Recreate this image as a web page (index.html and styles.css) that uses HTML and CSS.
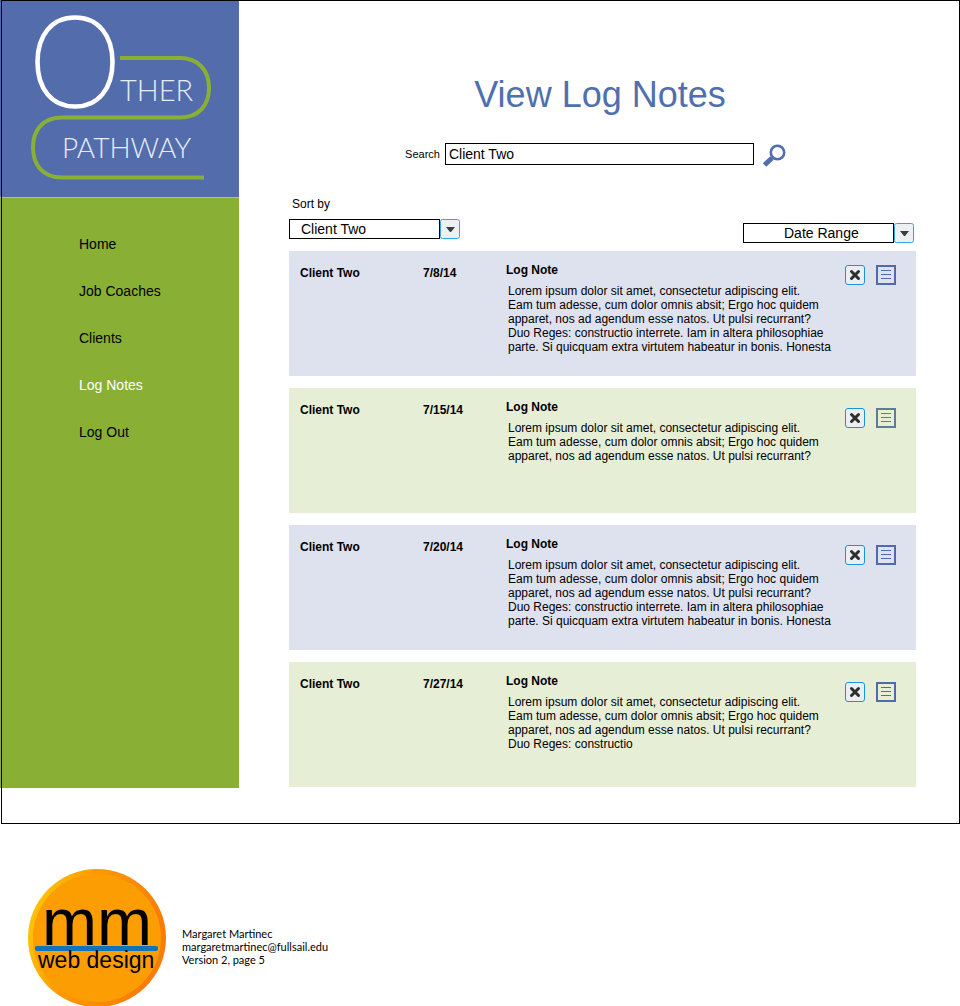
FILE: index.html
```html
<!DOCTYPE html>
<html lang="en">
<head>
<meta charset="utf-8">
<title>Other Pathway – View Log Notes</title>
<link rel="stylesheet" href="styles.css">
</head>
<body>
<svg class="sprite" aria-hidden="true">
  <symbol id="arrow" viewBox="0 0 20 20">
    <rect x="0.5" y="0.5" width="19" height="19" rx="2" fill="#edf0f3" stroke="#35a5e8"/>
    <path d="M6 8h9l-4 5h-1z" fill="#3c3c3c"/>
  </symbol>
  <symbol id="cross" viewBox="0 0 20 20">
    <rect x="0.5" y="0.5" width="19" height="19" rx="2.500" fill="#eceff2" stroke="#1794dd"/>
    <path d="M6.500 6.500l7 7M13.500 6.500l-7 7" stroke="#2e2e2e" stroke-width="3" stroke-linecap="round"/>
  </symbol>
  <symbol id="note" viewBox="0 0 20 20">
    <rect x="1" y="1" width="18" height="18" fill="none" stroke="currentColor" stroke-width="2"/>
    <path d="M5 5.500h10M5 9.500h10M5 13.500h10" stroke="currentColor"/>
  </symbol>
</svg>

<div class="frame">
  <aside class="sidebar">
    <a class="brand" href="#" aria-label="Other Pathway">
      <svg class="brand-logo" viewBox="0 0 239 197" width="239" height="197">
        <path d="M120 58H180C198 58 209 70 209 88S198 117.500 180 117.500H62C43 117.500 33 130 33 147.500S43 177.500 62 177.500H204" fill="none" stroke="#8aaf35" stroke-width="4"/>
        <path d="M75 17.500C98 17.500 112.500 35 112.500 62S98 106.500 75 106.500S37.500 89 37.500 62S52 17.500 75 17.500Z" fill="none" stroke="#fff" stroke-width="4.600"/>
        <text class="logo-text logo-text-top" x="120" y="101">THER</text>
        <text class="logo-text logo-text-bottom" x="62" y="158">PATHWAY</text>
      </svg>
    </a>
    <nav class="menu">
      <a href="#">Home</a>
      <a href="#">Job Coaches</a>
      <a href="#">Clients</a>
      <a class="current" href="#" aria-current="page">Log Notes</a>
      <a href="#">Log Out</a>
    </nav>
  </aside>

  <main class="content">
    <h1>View Log Notes</h1>
    <form class="search">
      <label for="q">Search</label>
      <input id="q" type="text" value="Client Two">
      <button type="button" aria-label="Search">
        <svg viewBox="0 0 24 24" width="24" height="24">
          <circle cx="15.500" cy="9.500" r="6.700" fill="none" stroke="#4f6fb0" stroke-width="2.600"/>
          <path d="M10 15l-7.500 7" stroke="#4f6fb0" stroke-width="5"/>
        </svg>
      </button>
    </form>

    <div class="filters">
      <div class="sort">
        <label for="sort">Sort by</label>
        <span class="picker">
          <select id="sort"><option>Client Two</option></select>
          <svg width="20" height="20" aria-hidden="true"><use href="#arrow"/></svg>
        </span>
      </div>
      <span class="picker picker-date">
        <select aria-label="Date range"><option>Date Range</option></select>
        <svg width="20" height="20" aria-hidden="true"><use href="#arrow"/></svg>
      </span>
    </div>

    <section class="entries">
      <article class="entry">
        <h2>Client Two</h2>
        <time datetime="2014-07-08">7/8/14</time>
        <div class="note">
          <h3>Log Note</h3>
          <p>Lorem ipsum dolor sit amet, consectetur adipiscing elit.<br>Eam tum adesse, cum dolor omnis absit; Ergo hoc quidem<br>apparet, nos ad agendum esse natos. Ut pulsi recurrant?<br>Duo Reges: constructio interrete. Iam in altera philosophiae<br>parte. Si quicquam extra virtutem habeatur in bonis. Honesta</p>
        </div>
        <div class="actions">
          <button type="button" aria-label="Delete note"><svg width="20" height="20"><use href="#cross"/></svg></button>
          <button type="button" aria-label="Open note"><svg width="20" height="20"><use href="#note"/></svg></button>
        </div>
      </article>
      <article class="entry entry-green entry-muted">
        <h2>Client Two</h2>
        <time datetime="2014-07-15">7/15/14</time>
        <div class="note">
          <h3>Log Note</h3>
          <p>Lorem ipsum dolor sit amet, consectetur adipiscing elit.<br>Eam tum adesse, cum dolor omnis absit; Ergo hoc quidem<br>apparet, nos ad agendum esse natos. Ut pulsi recurrant?</p>
        </div>
        <div class="actions">
          <button type="button" aria-label="Delete note"><svg width="20" height="20"><use href="#cross"/></svg></button>
          <button type="button" aria-label="Open note"><svg width="20" height="20"><use href="#note"/></svg></button>
        </div>
      </article>
      <article class="entry">
        <h2>Client Two</h2>
        <time datetime="2014-07-20">7/20/14</time>
        <div class="note">
          <h3>Log Note</h3>
          <p>Lorem ipsum dolor sit amet, consectetur adipiscing elit.<br>Eam tum adesse, cum dolor omnis absit; Ergo hoc quidem<br>apparet, nos ad agendum esse natos. Ut pulsi recurrant?<br>Duo Reges: constructio interrete. Iam in altera philosophiae<br>parte. Si quicquam extra virtutem habeatur in bonis. Honesta</p>
        </div>
        <div class="actions">
          <button type="button" aria-label="Delete note"><svg width="20" height="20"><use href="#cross"/></svg></button>
          <button type="button" aria-label="Open note"><svg width="20" height="20"><use href="#note"/></svg></button>
        </div>
      </article>
      <article class="entry entry-green">
        <h2>Client Two</h2>
        <time datetime="2014-07-27">7/27/14</time>
        <div class="note">
          <h3>Log Note</h3>
          <p>Lorem ipsum dolor sit amet, consectetur adipiscing elit.<br>Eam tum adesse, cum dolor omnis absit; Ergo hoc quidem<br>apparet, nos ad agendum esse natos. Ut pulsi recurrant?<br>Duo Reges: constructio</p>
        </div>
        <div class="actions">
          <button type="button" aria-label="Delete note"><svg width="20" height="20"><use href="#cross"/></svg></button>
          <button type="button" aria-label="Open note"><svg width="20" height="20"><use href="#note"/></svg></button>
        </div>
      </article>
    </section>
  </main>
</div>

<footer class="credit">
  <svg viewBox="0 0 138 137" width="138" height="137" role="img" aria-label="mm web design">
    <defs>
      <linearGradient id="rim" x1="0" y1="0" x2="1" y2="0.300">
        <stop offset="0" stop-color="#ffd000"/>
        <stop offset="0.450" stop-color="#fb9b04"/>
        <stop offset="1" stop-color="#f87c08"/>
      </linearGradient>
    </defs>
    <circle cx="69" cy="69" r="69" fill="url(#rim)"/>
    <circle cx="69" cy="69" r="64" fill="#fb9d03"/>
    <text class="mono" x="14" y="76">mm</text>
    <rect x="7" y="77" width="123" height="5" rx="2" fill="#0f74ba"/>
    <text class="tagline" x="10" y="99">web design</text>
  </svg>
  <address>Margaret Martinec<br>margaretmartinec@fullsail.edu<br>Version 2, page 5</address>
</footer>
</body>
</html>
```

FILE: styles.css
```css
* {
  box-sizing: border-box;
}

body {
  margin: 0;
  background: #fff;
  color: #000;
  font: 12px/14px "Liberation Sans", Arial, sans-serif;
}

h1, h2, h3, p {
  margin: 0;
}

button {
  padding: 0;
  border: 0;
  background: none;
  cursor: pointer;
}

svg {
  display: block;
}

.sprite {
  position: absolute;
  width: 0;
  height: 0;
}

.frame {
  position: relative;
  display: flex;
  padding-bottom: 36px;
}

.frame::after {
  content: "";
  position: absolute;
  inset: 0 0 0 1px;
  border: 1px solid #000;
  pointer-events: none;
}

.sidebar {
  display: flex;
  flex: none;
  flex-direction: column;
  width: 239px;
  background: #8aaf35;
}

.brand {
  background: #536dac;
  border-bottom: 1px solid #a9b7cf;
}

.logo-text {
  fill: #e6ebf7;
  font-family: Lato, sans-serif;
  font-weight: 300;
}

.logo-text-top {
  font-size: 29px;
}

.logo-text-bottom {
  font-size: 28px;
}

.menu {
  display: flex;
  flex-direction: column;
  align-items: flex-start;
  gap: 31px;
  padding: 38px 20px 38px 79px;
  font-size: 14px;
  line-height: 16px;
}

.menu a {
  color: #000;
  text-decoration: none;
}

.menu .current {
  color: #fff;
}

.content {
  flex: 1;
  min-width: 0;
  padding: 74px 44px 0 50px;
}

h1 {
  padding-right: 5px;
  color: #4f6fb0;
  font-size: 36px;
  font-weight: 400;
  line-height: 42px;
  text-align: center;
}

.search {
  display: flex;
  justify-content: center;
  padding: 27px 14px 0 0;
}

.search label {
  padding: 4px 5px 0 0;
  font-size: 11px;
}

.search input {
  width: 309px;
  height: 22px;
  padding: 0 3px;
  border: 1px solid #000;
  border-radius: 0;
  background: #fff;
  color: #000;
  font: inherit;
  font-size: 14px;
}

.search button {
  margin-left: 8px;
}

.filters {
  display: flex;
  align-items: flex-end;
  justify-content: space-between;
  padding: 30px 2px 8px 0;
}

.sort {
  display: flex;
  flex-direction: column;
  gap: 8px;
  padding-bottom: 4px;
}

.sort label {
  padding-left: 3px;
}

.picker {
  display: flex;
}

.picker select {
  width: 151px;
  height: 20px;
  padding: 0 11px;
  border: 1px solid #000;
  border-radius: 0;
  background: #fff;
  color: #000;
  font: inherit;
  font-size: 14px;
  line-height: 18px;
  appearance: none;
}

.picker-date select {
  padding-left: 40px;
}

.entries {
  display: grid;
  gap: 12px;
  padding-bottom: 1px;
}

.entry {
  display: grid;
  grid-template-columns: 123px 83px 1fr auto;
  min-height: 125px;
  padding: 12px 20px 12px 11px;
  background: #dee1ee;
  color: #000;
}

.entry-green {
  background: #e6eed6;
}

.entry h2,
.entry time {
  padding-top: 3px;
  font-size: 12px;
  font-weight: 700;
}

.entry h3 {
  font-size: 12px;
  line-height: 14px;
}

.note p {
  padding: 7px 0 0 2px;
}

.actions {
  display: flex;
  align-items: flex-start;
  gap: 11px;
  padding-top: 8px;
  color: #4f6aad;
}

.entry:first-child .actions {
  padding-top: 2px;
}

.entry-muted .actions button:last-child {
  color: #5c7c97;
}

.actions button {
  color: inherit;
}

.credit {
  display: flex;
  align-items: flex-start;
  gap: 16px;
  padding: 45px 28px 0;
}

.credit address {
  padding-top: 58px;
  font: 11px/13px Lato, sans-serif;
}

.mono {
  font-size: 66px;
}

.tagline {
  font-size: 23px;
}
```
